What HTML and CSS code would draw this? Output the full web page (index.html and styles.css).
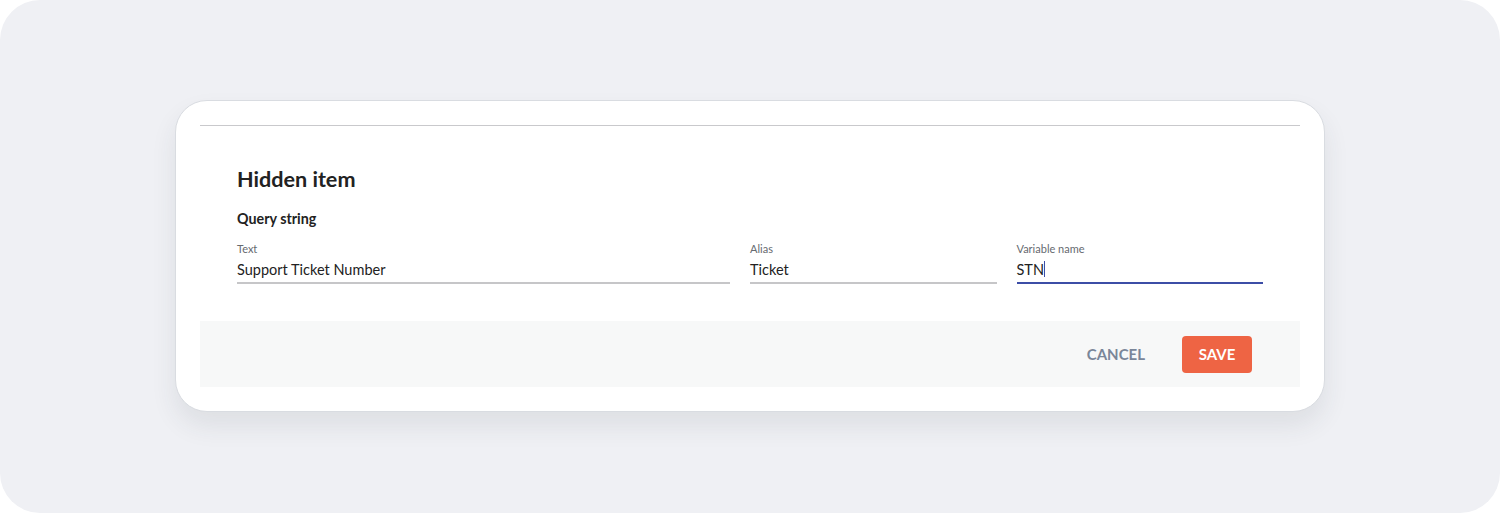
FILE: index.html
```html
<!DOCTYPE html>
<html lang="en">
<head>
    <meta charset="UTF-8">
    <title>Hidden item</title>
    <link rel="stylesheet" href="styles.css">
</head>
<body>

<div class="frame">
    <div class="card">
        <hr class="divider">

        <div class="content">
            <h2 class="title">Hidden item</h2>
            <h4 class="subtitle">Query string</h4>

            <div class="fields">
                <div class="field field-wide">
                    <label>Text</label>
                    <div class="value">Support Ticket Number</div>
                </div>
                <div class="field">
                    <label>Alias</label>
                    <div class="value">Ticket</div>
                </div>
                <div class="field focused">
                    <label>Variable name</label>
                    <div class="value">STN<span class="caret"></span></div>
                </div>
            </div>
        </div>

        <div class="actions">
            <button class="btn-cancel">CANCEL</button>
            <button class="btn-save">SAVE</button>
        </div>
    </div>
</div>

</body>
</html>
```

FILE: styles.css
```css
body {
    margin: 0;
    background: #fff;
    font-family: Lato, "Open Sans", sans-serif;
}
.frame {
    width: 1500px;
    height: 513px;
    background: #eff0f4;
    border-radius: 40px;
    padding-top: 100px;
    box-sizing: border-box;
}
.card {
    width: 1150px;
    height: 312px;
    margin-left: 175px;
    padding: 24px 24px 0;
    box-sizing: border-box;
    background: #fff;
    border: 1px solid #d9dce1;
    border-radius: 32px;
    box-shadow: 0 14px 26px rgba(40, 50, 70, 0.09);
}
.divider {
    margin: 0;
    border: none;
    border-top: 1px solid #c9c9cc;
}
.content {
    padding: 0 37px;
}
.title {
    margin: 39px 0 0;
    font-size: 21.6px;
    line-height: 28px;
    font-weight: 700;
    color: #222;
}
.subtitle {
    margin: 17px 0 0;
    font-size: 14.3px;
    line-height: 18px;
    font-weight: 700;
    color: #222;
}
.fields {
    display: flex;
    gap: 20px;
    margin-top: 14px;
}
.field {
    flex: 1 1 0;
    border-bottom: 2px solid #c6c6c8;
}
.field-wide {
    flex: 2 1 0;
}
.field.focused {
    border-bottom-color: #3c4da6;
}
.field label {
    display: block;
    font-size: 11px;
    line-height: 14px;
    color: #666a70;
}
.field .value {
    font-size: 14.5px;
    line-height: 20px;
    padding: 4px 0 2px;
    color: #222;
}
.caret {
    display: inline-block;
    width: 1px;
    height: 16px;
    background: #3c4da6;
    vertical-align: -2px;
}
.actions {
    display: flex;
    justify-content: flex-end;
    align-items: center;
    gap: 37px;
    height: 66px;
    margin-top: 37px;
    padding-right: 48px;
    background: #f7f8f8;
}
.actions button {
    border: none;
    font-family: Lato, sans-serif;
    font-size: 15px;
    font-weight: 700;
    cursor: pointer;
}
.btn-cancel {
    background: none;
    color: #7a8699;
    padding: 0;
}
.btn-save {
    background: #ee6444;
    color: #fff;
    width: 70px;
    height: 37px;
    border-radius: 4px;
}
```
